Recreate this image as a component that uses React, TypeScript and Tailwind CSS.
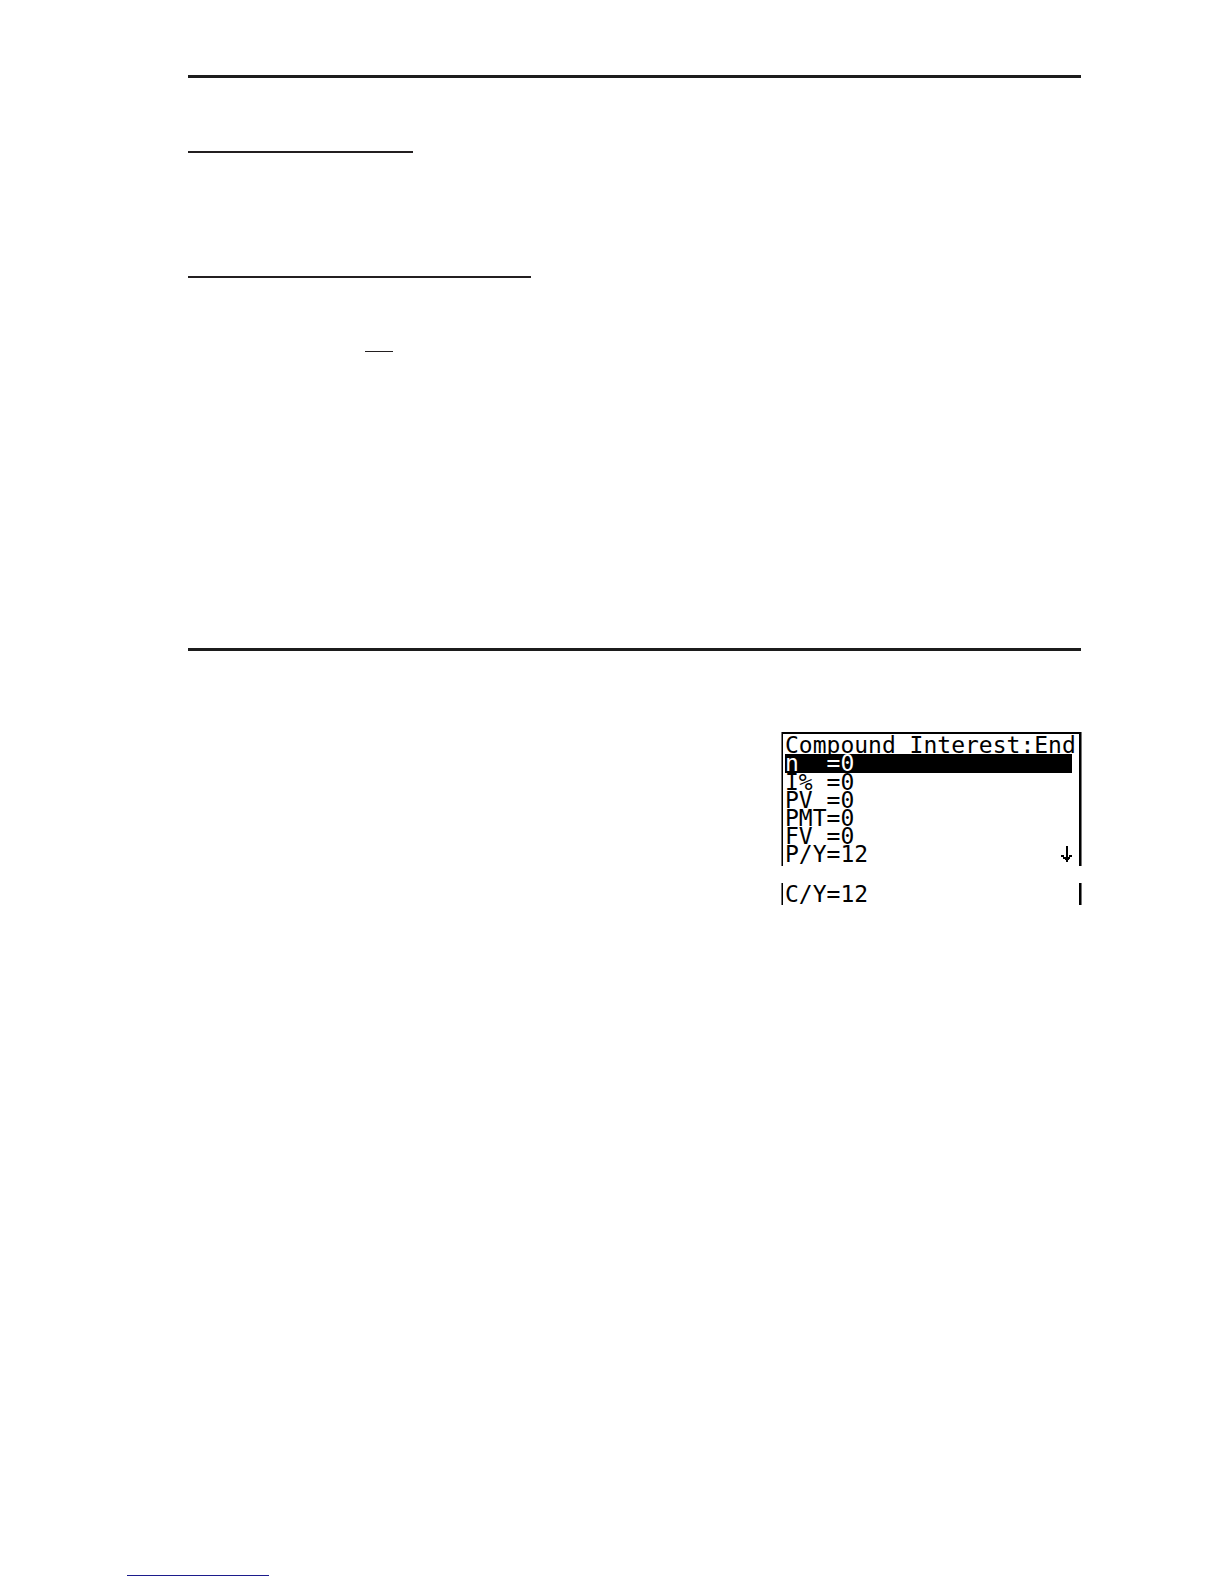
import React from 'react';

interface Row {
    label: string;
    value: string;
}

const ROWS: Row[] = [
    { label: 'n', value: '0' },
    { label: 'I%', value: '0' },
    { label: 'PV', value: '0' },
    { label: 'PMT', value: '0' },
    { label: 'FV', value: '0' },
    { label: 'P/Y', value: '12' },
];

const LcdRow: React.FC<{ row: Row; selected?: boolean }> = ({ row, selected }) => (
    <div className={selected ? 'mr-[7px] h-[19px] bg-black leading-[18px] text-white' : 'h-[18px] leading-[18px]'}>
        <dt className="inline-block w-[3ch]">{row.label}</dt>
        <dd className="inline-block">={row.value}</dd>
    </div>
);

// Points to the rows below the visible part of the screen
const DownArrow: React.FC = () => (
    <svg viewBox="0 0 11 16" className="absolute right-[7px] bottom-1 h-4 w-[11px]" shapeRendering="crispEdges" aria-hidden="true">
        <path d="M5 0h2v16h-2z M0 9h3v2h-3z M8 9h3v2h-3z M2 11h7v2h-7z M4 13h4v1h-4z" fill="#000" />
    </svg>
);

const CalculatorScreen: React.FC = () => (
    <section className="ml-auto w-[299px] font-['DejaVu_Sans_Mono',monospace] text-[23px] text-black">
        <div className="relative border-t-2 border-r-2 border-l border-black pt-[2px] pb-[3px] pl-[2px] shadow-[1px_0_0_#777,-1px_0_0_#777]">
            <h2 className="h-[18px] leading-[18px] whitespace-nowrap">Compound Interest:End</h2>
            <dl>
                {ROWS.map((row, i) => (
                    <LcdRow key={row.label} row={row} selected={i === 0} />
                ))}
            </dl>
            <DownArrow />
        </div>
        <dl className="mt-[17px] border-r-2 border-l border-black py-[2px] pl-[2px] shadow-[1px_0_0_#777,-1px_0_0_#777]">
            <LcdRow row={{ label: 'C/Y', value: '12' }} />
        </dl>
    </section>
);

export default function App() {
    return (
        <div className="flex min-h-screen flex-col bg-white">
            <main className="pt-[75px] pr-[143px] pl-[188px]">
                <hr className="h-[3px] border-0 bg-[#1c1c1c]" />
                <hr className="mt-[73px] h-[2px] w-[225px] border-0 bg-[#231f20]" />
                <hr className="mt-[123px] h-[2px] w-[343px] border-0 bg-[#231f20]" />
                <hr className="mt-[73px] ml-[177px] h-px w-7 border-0 bg-[#231f20]" />
                <hr className="mt-[296px] mb-[81px] h-[3px] border-0 bg-[#1c1c1c]" />
                <CalculatorScreen />
            </main>
            <footer className="mt-auto pb-2 pl-[127px]">
                <hr className="h-px w-[142px] border-0 bg-[#1c1c8c]" />
            </footer>
        </div>
    );
}
